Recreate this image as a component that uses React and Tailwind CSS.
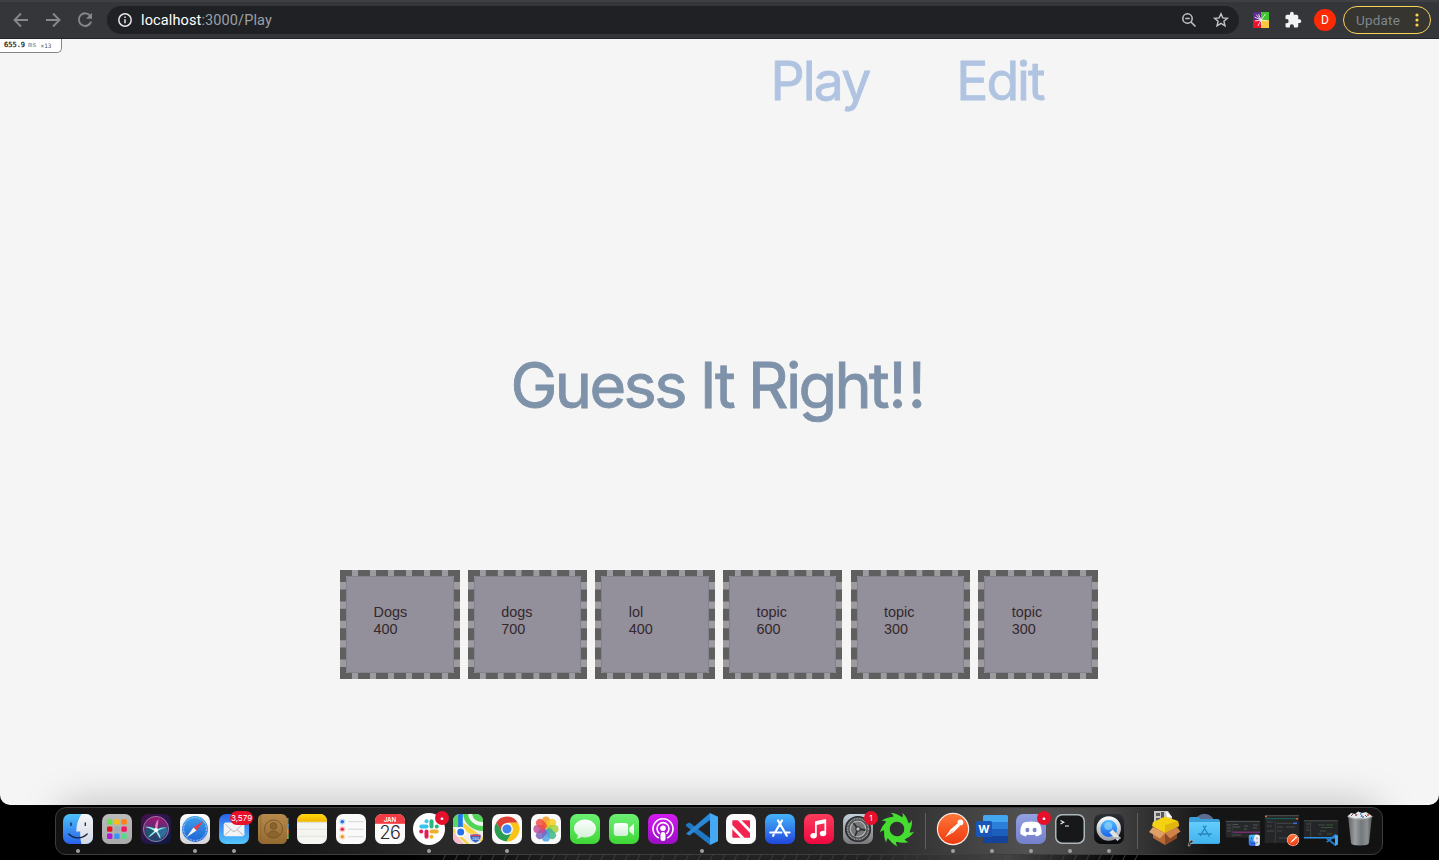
import React from 'react';

const petals = [0, 45, 90, 135, 180, 225, 270, 315];

function Svg({ children, className = 'h-[30px] w-[30px]' }) {
  return (
    <svg viewBox="0 0 30 30" className={'block shrink-0 overflow-visible ' + className}>
      {children}
    </svg>
  );
}

function Gradients() {
  const g = (id, a, b, diag) => (
    <linearGradient id={id} x1="0" y1="0" x2={diag ? 1 : 0} y2="1">
      <stop offset="0" stopColor={a} />
      <stop offset="1" stopColor={b} />
    </linearGradient>
  );
  return (
    <svg className="absolute h-0 w-0">
      <defs>
        {g('gFinder', '#4cc1fb', '#2a62ea')}
        {g('gFinderR', '#f4f5f8', '#d3d9e4')}
        {g('gGray', '#b9bab9', '#a9aaa9')}
        {g('gSiri', '#47104f', '#0b1b45', true)}
        {g('gOrb', '#a01475', '#154a6b')}
        {g('gBlue', '#3fa1ea', '#1b62d6')}
        {g('gMail', '#2a63ea', '#53c7fb')}
        {g('gPaper', '#ffffff', '#d5d5d8')}
        {g('gBrown', '#b58a4b', '#94692f')}
        {g('gYellow', '#ffd60a', '#f0b400')}
        {g('gGreen', '#6bf073', '#3fd636')}
        {g('gWhite', '#ffffff', '#d0efd4')}
        {g('gPod', '#d31bf0', '#9a0fc4')}
        {g('gStore', '#45b4fa', '#2047dc')}
        {g('gMusic', '#fb3b5c', '#ee083f')}
        {g('gPref', '#c4d0da', '#77787a')}
        {g('gPost', '#ff7638', '#ee3a10')}
        {g('gDisc', '#93a0e2', '#7480cb')}
        {g('gQt', '#2c2f33', '#090a0b')}
        {g('gSilver', '#f7f7f9', '#9da4ad')}
        {g('gLens', '#52c8ff', '#1557ec')}
        {g('gFolder', '#64cdfd', '#3fb2ee')}
        <linearGradient id="gTrash" x1="0" x2="1">
          <stop offset="0" stopColor="#5f6365" />
          <stop offset=".3" stopColor="#9a9ea0" />
          <stop offset=".55" stopColor="#73787a" />
          <stop offset=".8" stopColor="#8c9092" />
          <stop offset="1" stopColor="#505355" />
        </linearGradient>
        <clipPath id="cRound"><rect width="30" height="30" rx="7" /></clipPath>
      </defs>
    </svg>
  );
}

const Tile = ({ fill }) => <rect width="30" height="30" rx="7" fill={fill} />;

const finderArt = (
  <g clipPath="url(#cRound)">
    <rect width="30" height="30" fill="url(#gFinder)" />
    <path d="M18.500 0C15 5 13.400 11 13.200 17.500h4c-.2 4.500.2 8.500 1.300 12.500H30V0z" fill="url(#gFinderR)" />
    <path d="M8 9v2.400M22.300 9v2.400M5.800 20c5 5.200 13.400 5.200 18.400 0" fill="none" stroke="#15233d" strokeWidth="1.300" strokeLinecap="round" />
  </g>
);

const vsArt = (
  <g>
    <path d="M-1 10.300l3.500-1.900L23 24v7L-1 12z" fill="#1f78c4" />
    <path d="M-1 19.700L23-1v7L2.500 21.600z" fill="#2b87d6" />
    <path d="M23-1l8 3.800v24.400L23 31z" fill="#45a8f4" />
  </g>
);

const postArt = (
  <g>
    <circle cx="15" cy="15" r="16.200" fill="#f8ece6" />
    <circle cx="15" cy="15" r="15" fill="url(#gPost)" />
    <path d="M7 23.500l5.500-8 7-6 2.600 2.300-6.600 6.500-5.500 3z" fill="#fff" />
    <path d="M12 19.500l3-3" stroke="#ee6d42" strokeWidth=".7" />
    <circle cx="22.400" cy="8.400" r="2.900" fill="#fff" />
  </g>
);

const Finder = () => <Svg>{finderArt}</Svg>;

const Launchpad = () => {
  const c = ['#62e64a', '#fbbd13', '#fa8313', '#e8131b', '#a3abb0', '#f2185f', '#b018d8', '#3a93f5', '#57d98f'];
  return (
    <Svg>
      <Tile fill="url(#gGray)" />
      {c.map((f, i) => (
        <rect key={i} x={5 + (i % 3) * 7.200} y={5.200 + Math.floor(i / 3) * 7.200} width="5.400" height="5.400" rx="1.300" fill={f} />
      ))}
    </Svg>
  );
};

const Siri = () => (
  <Svg>
    <Tile fill="url(#gSiri)" />
    <circle cx="15" cy="15" r="12.600" fill="url(#gOrb)" stroke="#a98bb4" strokeWidth=".8" />
    <path d="M5 16c3-5 6-4 10-1-2 5-4 8-8 8-1.500-1.500-2-4-2-7z" fill="#1d5470" />
    <path d="M16 16c4-4 8-4 10.500-1-1 5-3 8-7 9-1-3-1.500-5-3.500-8z" fill="#2f6d9c" />
    <path d="M4 13c4-.6 8 .4 11 2.600 4-1.600 7-2.400 11-2-4 .9-7 2-9.500 3.400 2 2.500 3 5.500 3 8-2-2.500-3.400-5-4.500-7-2.500 2-5 4.400-8 5.500 1.800-2.500 4-4.700 6.500-6.500C10.500 15 7.500 13.800 4 13z" fill="#8eece4" />
    <path d="M14.500 16c-1-5 .6-8 3-11-.5 4-.5 7-1.500 11z" fill="#ef7fc0" />
    <circle cx="15" cy="16" r="2" fill="#fff" />
  </Svg>
);

const Safari = () => (
  <Svg>
    <Tile fill="url(#gPaper)" />
    <circle cx="15" cy="15" r="12.900" fill="url(#gBlue)" />
    <circle cx="15" cy="15" r="11.500" fill="none" stroke="#d9ecfb" strokeWidth="1.300" strokeDasharray=".5 1" />
    <path d="M23.500 6.800L13.500 13.500l3 3z" fill="#f8363b" />
    <path d="M6.500 23.200L13.500 13.500l3 3z" fill="#f5f5f5" />
  </Svg>
);

const Mail = () => (
  <Svg>
    <Tile fill="url(#gMail)" />
    <rect x="4.700" y="8.600" width="20.700" height="13.600" rx="2" fill="#f2f3f5" />
    <path d="M5.500 9.500l8 7.300q1.500 1.200 3 0l8-7.300M5.500 21.500l6.500-6M24.500 21.500l-6.500-6" fill="none" stroke="#a5a9b0" strokeWidth=".8" />
  </Svg>
);

const Contacts = () => (
  <Svg>
    <path d="M28 4h2.500v7H28z" fill="#7f8a83" />
    <path d="M28 10h2.700v5H28z" fill="#3f9fe0" />
    <path d="M28 15h2.700v5H28z" fill="#e88b31" />
    <path d="M28 20h2.700v5H28z" fill="#58bd61" />
    <rect x="0" width="29" height="30" rx="5.500" fill="url(#gBrown)" />
    <path d="M2.700 1v28" stroke="#8a6230" strokeWidth=".6" />
    <g fill="none" stroke="#7b5729" strokeWidth="1">
      <circle cx="15.500" cy="15" r="9" />
      <circle cx="15.500" cy="12" r="3.400" fill="#8a642f" />
      <path d="M9.500 21.500c1-6 11-6 12 0-3 3-9 3-12 0z" fill="#8a642f" />
    </g>
  </Svg>
);

const Notes = () => (
  <Svg>
    <g clipPath="url(#cRound)">
      <rect width="30" height="30" fill="#f4f4f1" />
      <rect width="30" height="7.800" fill="url(#gYellow)" />
      <path d="M0 8.600h30" stroke="#b5b3a8" strokeWidth=".7" strokeDasharray=".7 .7" />
      <path d="M0 15.300h30M0 22.300h30" stroke="#dcdcda" strokeWidth=".8" />
    </g>
  </Svg>
);

const Reminders = () => (
  <Svg>
    <Tile fill="#fafafa" />
    {['#1e6ee8', '#ec2b3e', '#f4922c'].map((c, i) => (
      <g key={c}>
        <circle cx="6.300" cy={7.700 + i * 7.500} r="2.600" fill="none" stroke={c} strokeOpacity=".45" strokeWidth=".6" />
        <circle cx="6.300" cy={7.700 + i * 7.500} r="1.800" fill={c} />
        <path d={`M12 ${7.700 + i * 7.500}h15.500`} stroke="#cfcfcf" strokeWidth=".9" />
      </g>
    ))}
  </Svg>
);

const Calendar = () => (
  <Svg>
    <g clipPath="url(#cRound)">
      <rect width="30" height="30" fill="#fafafa" />
      <rect width="30" height="9.800" fill="#f23c41" />
    </g>
    <text x="15" y="7.800" textAnchor="middle" fontFamily="Inter, sans-serif" fontWeight="600" fontSize="6.200" fill="#fff">JAN</text>
    <text x="14.800" y="25.400" textAnchor="middle" fontFamily="Inter, sans-serif" fontWeight="300" fontSize="18" letterSpacing="-.6" fill="#292929">26</text>
  </Svg>
);

const Slack = () => (
  <Svg>
    <circle cx="15" cy="15" r="16" fill="#fff" />
    <g strokeWidth="4" strokeLinecap="round">
      <path d="M7.300 12.500h5.200" stroke="#36c5f0" />
      <path d="M12.500 7.200v.1" stroke="#36c5f0" />
      <path d="M17.500 7.300v5.200" stroke="#2eb67d" />
      <path d="M22.700 12.500h.1" stroke="#2eb67d" />
      <path d="M17.500 17.500h5.200" stroke="#ecb22e" />
      <path d="M17.500 22.700v.1" stroke="#ecb22e" />
      <path d="M12.500 17.500v5.200" stroke="#e01e5a" />
      <path d="M7.200 17.500h.1" stroke="#e01e5a" />
    </g>
  </Svg>
);

const Maps = () => (
  <Svg>
    <g clipPath="url(#cRound)">
      <rect width="30" height="30" fill="#f0eee8" />
      <path d="M10 0h20v17C20 17 11 10 10 0z" fill="#4ed457" />
      <path d="M17 0c1 6 6 10 13 10" fill="none" stroke="#f4f4f0" strokeWidth="4" />
      <path d="M0 0h6v13H0z" fill="#5dd365" />
      <path d="M0 18l11 12H0z" fill="#f7bccb" />
      <path d="M9 11l21 15" stroke="#fbd33a" strokeWidth="5" />
      <path d="M-1 15l18 17" stroke="#f6d042" strokeWidth="2.500" />
      <path d="M7.500 0v16" stroke="#1e78f0" strokeWidth="4.600" />
      <circle cx="7.700" cy="18" r="5.200" fill="#fff" />
      <circle cx="7.700" cy="18" r="3.500" fill="#2473ec" />
      <path d="M17 20.500q5.500-1.500 11 0v3q-.5 3.500-5.500 5.500-5-2-5.500-5.500z" fill="#3162c4" stroke="#fff" strokeWidth=".7" />
      <path d="M17.500 21.500h10" stroke="#e8414a" strokeWidth="1.400" />
    </g>
    <text x="22.500" y="26.300" textAnchor="middle" fontFamily="Inter, sans-serif" fontSize="3.800" fill="#fff">280</text>
  </Svg>
);

const Chrome = () => (
  <Svg>
    <Tile fill="#fafafa" />
    <path d="M15 15L4.200 8.800A12.400 12.400 0 0 1 25.800 8.800H15z" fill="#dd4034" />
    <path d="M4.200 8.800A12.400 12.400 0 0 0 14.500 27.400L20.300 18 9.700 18z" fill="#2a9e51" />
    <path d="M25.800 8.800A12.400 12.400 0 0 1 14.500 27.400L20.400 18 18 8.800z" fill="#fbc316" />
    <path d="M4.200 8.800l5.500 9.200L15 15V8.800z" fill="#dd4034" />
    <path d="M4.200 8.800l6.500 11 1-1z" fill="#2a9e51" />
    <circle cx="15" cy="15" r="5.900" fill="#fff" />
    <circle cx="15" cy="15" r="4.600" fill="#4084f3" />
  </Svg>
);

const Photos = () => {
  const c = ['#f79a1d', '#f6cd1b', '#a6cf3c', '#3fb58c', '#4ba2e2', '#7763be', '#c14e99', '#ef4d40'];
  return (
    <Svg>
      <Tile fill="#fafafa" />
      {petals.map((a, i) => (
        <rect key={a} x="11.100" y="2.400" width="7.800" height="12" rx="3.900" fill={c[i]} opacity=".84" transform={`rotate(${a} 15 15)`} />
      ))}
    </Svg>
  );
};

const Messages = () => (
  <Svg>
    <Tile fill="url(#gGreen)" />
    <path d="M15 5.500c6.300 0 11 4 11 9s-4.700 9-11 9c-1.300 0-2.600-.2-3.700-.5-1.200 1-3 1.700-5 1.700 1-.9 1.600-2.200 1.500-3.500C5.400 19.500 4 17.100 4 14.500c0-5 4.700-9 11-9z" fill="url(#gWhite)" />
  </Svg>
);

const FaceTime = () => (
  <Svg>
    <Tile fill="url(#gGreen)" />
    <rect x="4.800" y="9" width="14.300" height="13" rx="3" fill="url(#gWhite)" />
    <path d="M20.300 13.800l4.700-4v11.700l-4.700-4z" fill="url(#gWhite)" />
  </Svg>
);

const Podcasts = () => (
  <Svg>
    <Tile fill="url(#gPod)" />
    <g fill="none" stroke="#fff" strokeWidth="1.600" strokeLinecap="round">
      <path d="M10.400 23.700a10 10 0 1 1 9.200 0" />
      <path d="M11.200 19.300a6 6 0 1 1 7.600 0" />
    </g>
    <circle cx="15" cy="14.300" r="2.800" fill="#fff" />
    <rect x="12.500" y="18" width="5" height="9" rx="2.500" fill="#fff" />
  </Svg>
);

const News = () => (
  <Svg>
    <Tile fill="#fcfcfc" />
    <path d="M6.300 7.500v-.2q0-1 1-1h4.500L24 19v4.700H18.500L6.300 11z" fill="#f3234f" />
    <path d="M15.500 6.300H23q1 0 1 1v7.500z M6.300 15.200l8.200 8.500H7.300q-1 0-1-1z" fill="#f3234f" />
  </Svg>
);

const AppStore = () => (
  <Svg>
    <Tile fill="url(#gStore)" />
    <g stroke="#fff" strokeWidth="2.200" strokeLinecap="round">
      <path d="M13 6.500l8.800 15.200M17 6.500L10 18.500M8.700 20.800l-.6 1M5.300 18.500h11M20.500 18.500h4" />
    </g>
  </Svg>
);

const Music = () => (
  <Svg>
    <Tile fill="url(#gMusic)" />
    <path d="M11.200 7.200l10.800-2.300v4L11.200 11.200z" fill="#fff" />
    <path d="M11.900 8v13.500M21.300 6v13" stroke="#fff" strokeWidth="1.700" />
    <ellipse cx="9.600" cy="21.800" rx="3.200" ry="2.700" fill="#fff" />
    <ellipse cx="19" cy="19.500" rx="3.200" ry="2.700" fill="#fff" />
  </Svg>
);

const Preferences = () => (
  <Svg>
    <Tile fill="url(#gPref)" />
    <circle cx="15" cy="15" r="12.400" fill="#48494b" stroke="#2b2c2e" strokeWidth="1.400" />
    <circle cx="15" cy="15" r="10.400" fill="none" stroke="#a4a6a8" strokeWidth="1.600" strokeDasharray=".9 .7" />
    <circle cx="15" cy="15" r="7.800" fill="#77797c" stroke="#b1b3b5" strokeWidth="1.300" />
    <path d="M15 15l7.500 1M15 15l-4.600-6M15 15l-3 7.200" stroke="#303133" strokeWidth="1.800" />
    <circle cx="15" cy="15" r="2.200" fill="#bcbec0" stroke="#303133" strokeWidth="1.100" />
  </Svg>
);

const GreenRing = () => (
  <Svg>
    <circle cx="15" cy="15" r="11" fill="none" stroke="#46dc31" strokeWidth="4.200" />
    {[0, 40, 80, 120, 160, 200, 240, 280, 320].map((a) => (
      <g key={a} transform={`rotate(${a} 15 15)`}>
        <path d="M20 3.500C17 .8 13.500-.8 8.500-1.200 10.500 0 11.500 1.500 12 4z" fill="#46dc31" />
        <path d="M21 5.500C17 4 13 5 10 9c3-1.500 6-1.800 9.500-.5z" fill="#46dc31" />
      </g>
    ))}
  </Svg>
);

const Postman = () => <Svg>{postArt}</Svg>;

const Word = () => (
  <Svg>
    <path d="M7 1h22.500a1.500 1.500 0 0 1 1.500 1.500V8H6V2.500z" fill="#43a6ee" />
    <path d="M6 8h25v7H6z" fill="#2b7fd8" />
    <path d="M6 15h25v7H6z" fill="#1c5fbd" />
    <path d="M6 22h25v5.500a1.500 1.500 0 0 1-1.500 1.500h-22A1.500 1.500 0 0 1 6 27.500z" fill="#15429a" />
    <rect x="-1" y="7" width="16" height="16" rx="1.500" fill="#1955b6" />
    <text x="7" y="19.200" textAnchor="middle" fontFamily="Inter, sans-serif" fontWeight="700" fontSize="11" fill="#fff">W</text>
  </Svg>
);

const Discord = () => (
  <Svg>
    <Tile fill="url(#gDisc)" />
    <path d="M10.500 8q4.500-1.100 9 0c1-.1 3 .5 3.800 1.500 1.800 3 2.700 6.500 2.300 10.300-1.600 1.500-3.600 2.400-5.400 2.600l-1.300-2q-3.900 1-7.800 0l-1.300 2c-1.800-.2-3.800-1.100-5.400-2.600C4 16 4.900 12.500 6.700 9.500 7.500 8.500 9.500 7.900 10.500 8z" fill="#fff" />
    <ellipse cx="11.400" cy="16" rx="2" ry="2.200" fill="#7885cf" />
    <ellipse cx="18.600" cy="16" rx="2" ry="2.200" fill="#7885cf" />
  </Svg>
);

const Terminal = () => (
  <Svg>
    <rect width="30" height="30" rx="7" fill="#abb7ba" />
    <rect x="1.500" y="1.500" width="27" height="27" rx="5.800" fill="#171819" />
    <path d="M5.500 6.500l3.300 1.800-3.300 1.800M10 12h4" fill="none" stroke="#f0f0f0" strokeWidth="1.100" />
  </Svg>
);

const QuickTime = () => (
  <Svg>
    <Tile fill="url(#gQt)" />
    <circle cx="14.700" cy="14.500" r="10.300" fill="url(#gLens)" stroke="url(#gSilver)" strokeWidth="3.800" />
    <path d="M17 17l8 8.500" stroke="#dfe2e5" strokeWidth="4.300" />
    <path d="M20 24h6.500" stroke="#adb2b7" strokeWidth="2" />
    <circle cx="14.300" cy="12" r="4" fill="#a2dffb" opacity=".6" />
  </Svg>
);

const Box = () => (
  <Svg>
    <path d="M4-3h14l4 6v10H4z" fill="#c8c8c8" />
    <path d="M6-1h4v3H6zM11-2h3v6h-3zM6 4h4v3H6z" fill="#595959" />
    <path d="M16-3l6 6-5 1z" fill="#fff" />
    <path d="M3 14l12-5 12 5v10l-12 7-12-7z" fill="#b66a37" />
    <path d="M15 19l12-5v10l-12 7z" fill="#8a4a26" />
    <path d="M3 8l12-5.500L28 7l1 5-14 7L2 12z" fill="#f4d213" />
    <path d="M15 11l13-4 1 5-14 7z" fill="#e0b50e" />
    <path d="M3 13l12 6-5 5.500-11-6.500z" fill="#e09f66" />
    <path d="M27 13l-12 6 5 5.500 10.500-7z" fill="#cf8249" />
  </Svg>
);

const AppsFolder = () => (
  <Svg>
    <circle cx="15.500" cy="10" r="10.300" fill="#5d6d8e" />
    <path d="M0 4.500Q0 3 2 3h7l3 2h17q2 0 2 2.500v20.500q0 1.800-1.800 1.800H1.500Q0 29.800 0 28z" fill="#3a9fd9" />
    <path d="M0 8h31v20q0 1.800-1.800 1.800H1.500Q0 29.800 0 28z" fill="url(#gFolder)" />
    <path d="M14.300 12l5.800 10.300M17 12L11.500 21.500M9.500 20h8M20 20h2.300" fill="none" stroke="#2584bd" strokeWidth="1.300" strokeLinecap="round" />
    <path d="M-.8 32q0-4 2.500-5l-.6-1 3.300.6-1.500 3-.6-1q-1.500 1-1.400 3.400z" fill="#111" stroke="#ccc" strokeWidth=".6" />
  </Svg>
);

const WindowFiles = () => (
  <Svg>
    <rect x="-2.300" y="6.500" width="34.500" height="17" fill="#26282a" />
    <path d="M-2 7.500h34" stroke="#4a4d4f" strokeWidth="1" />
    <path d="M-1 11h4M-1 14h4M-1 17h4M5 10.500h5M5 13h7M5 21h8M16 12h4M16 15h3M25 11h5M25 14h4M25 21h5" stroke="#5d6162" strokeWidth=".8" />
    <path d="M5 18.200h27" stroke="#962c90" strokeWidth="1.100" />
    <path d="M4.200 9v14" stroke="#3f4244" strokeWidth=".8" />
    <g transform="translate(20.500 20.500) scale(.38)">{finderArt}</g>
  </Svg>
);

const WindowPostman = () => (
  <Svg>
    <rect x="-2.300" y="1" width="34.500" height="28" fill="#252628" />
    <path d="M-2 1.700h34" stroke="#4d5051" strokeWidth="1" />
    <path d="M-1 4.700h30" stroke="#15655a" strokeWidth="1" />
    <path d="M-2 2.500h2M29 4.700h2" stroke="#ee6035" strokeWidth="1.500" />
    <path d="M10 9.300h15M0 8h6M0 12h5M10 13h6M19 13h9M0 17h7M10 17h5M12 24h8" stroke="#4f5355" strokeWidth=".8" />
    <path d="M26 9.300h4" stroke="#3275e0" strokeWidth="1.500" />
    <path d="M8.300 7v22" stroke="#444648" strokeWidth=".7" />
    <g transform="translate(20.300 20.300) scale(.38)">{postArt}</g>
  </Svg>
);

const WindowCode = () => (
  <Svg>
    <rect x="-2.300" y="6" width="34.500" height="18.300" fill="#232527" />
    <path d="M-2 6.800h34" stroke="#4a4d4f" strokeWidth="1" />
    <path d="M-2 23.700h34" stroke="#2f8fe4" strokeWidth="1.400" />
    <path d="M0 10h4M0 13h3M0 16h4M12 11h7M14 17h6M12 20h4" stroke="#565b5e" strokeWidth=".7" />
    <path d="M15 13.500h12M20 11h7M21 20h5" stroke="#3d5a3c" strokeWidth=".9" />
    <path d="M4.600 8v15" stroke="#494c4e" strokeWidth=".7" />
    <g transform="translate(20.500 20.500) scale(.37)">{vsArt}</g>
  </Svg>
);

const Trash = () => (
  <Svg>
    <path d="M3 1l24 1-3 27q-.3 2.500-9 2.500T6 29z" fill="url(#gTrash)" />
    <path d="M3 2l3-3 4 1 3-2.500 4 1.500 4-1 3 2 3 2-4 2H7z" fill="#e8e8e8" />
    <path d="M6 2l2-2M11 2l1-2M20 1l2 2M16 3l1-2" stroke="#575757" strokeWidth="1" />
    <path d="M10 1h1.500M22 1h2" stroke="#e5453e" strokeWidth="1.500" />
    <path d="M15 0h1.500M17 3h2" stroke="#3f7fd0" strokeWidth="1.300" />
    <path d="M2.500 2.500q12.500 5 25 0" fill="none" stroke="#c4c8c9" strokeWidth="1" />
  </Svg>
);

const apps = [
  { Icon: Finder, dot: true },
  { Icon: Launchpad },
  { Icon: Siri },
  { Icon: Safari, dot: true },
  { Icon: Mail, dot: true, badge: '3,579' },
  { Icon: Contacts },
  { Icon: Notes },
  { Icon: Reminders },
  { Icon: Calendar },
  { Icon: Slack, dot: true, badge: '•' },
  { Icon: Maps },
  { Icon: Chrome, dot: true },
  { Icon: Photos },
  { Icon: Messages },
  { Icon: FaceTime },
  { Icon: Podcasts },
  { Icon: () => <Svg>{vsArt}</Svg>, dot: true },
  { Icon: News },
  { Icon: AppStore },
  { Icon: Music },
  { Icon: Preferences, badge: '1' },
  { Icon: GreenRing },
];

const openApps = [
  { Icon: Postman, dot: true },
  { Icon: Word, dot: true },
  { Icon: Discord, dot: true, badge: '•' },
  { Icon: Terminal, dot: true },
  { Icon: QuickTime, dot: true },
];

const stacks = [
  { Icon: Box },
  { Icon: AppsFolder },
  { Icon: WindowFiles },
  { Icon: WindowPostman },
  { Icon: WindowCode },
  { Icon: Trash },
];

function DockItem({ Icon, dot, badge }) {
  return (
    <div className="relative flex w-[39px] shrink-0 flex-col items-center pt-[6px]">
      <Icon />
      {dot && <span className="mt-[5px] h-1 w-1 rounded-full bg-[#a0a0a0]" />}
      {badge && (
        <span
          className={
            'absolute top-[2.500px] flex h-[14px] items-center justify-center rounded-full bg-[#e6102b] font-[Inter,sans-serif] text-[8px] leading-none text-white ' +
            (badge.length > 1 ? 'right-0 w-[23px]' : '-right-px w-[14px]')
          }
        >
          {badge}
        </span>
      )}
    </div>
  );
}

const Separator = () => (
  <div className="flex w-[17px] shrink-0 justify-center pt-[5px] pl-[2px]">
    <span className="h-9 w-px bg-[#606060]" />
  </div>
);

function Dock() {
  return (
    <div className="ml-[55px] flex h-12 w-[1328px] rounded-[11px] border border-[#3d3d3d] bg-[linear-gradient(90deg,#131313_0%,#171717_18%,#2a2a2a_29%,#222222_38%,#222222_52%,#2b2b2b_62%,#505050_73%,#464646_79%,#151515_87%,#121212_100%)] pl-[2px]">
      {apps.map((a, i) => <DockItem key={i} {...a} />)}
      <Separator />
      {openApps.map((a, i) => <DockItem key={i} {...a} />)}
      <Separator />
      {stacks.map((a, i) => <DockItem key={i} {...a} />)}
    </div>
  );
}

function Toolbar() {
  return (
    <header className="flex h-[39px] shrink-0 items-center border-t-2 border-b border-t-[#3f4044] border-b-[#242326] bg-[#35363a] pr-2 font-[Roboto,sans-serif]">
      <div className="flex w-[107px] items-center gap-2 pl-[9px]">
        <svg viewBox="0 0 24 24" className="h-6 w-6" fill="none" stroke="#86888a" strokeWidth="1.900"><path d="M19 12H6M12 5.500L5.500 12l6.500 6.500" /></svg>
        <svg viewBox="0 0 24 24" className="h-6 w-6" fill="none" stroke="#86888a" strokeWidth="1.900"><path d="M5 12h13M12 5.500l6.500 6.500-6.500 6.500" /></svg>
        <svg viewBox="0 0 24 24" className="h-6 w-6" fill="none" stroke="#86888a" strokeWidth="1.900"><path d="M17.500 8.200A6.300 6.300 0 1 0 18.200 13.500" /><path d="M19 4.800v6h-6z" fill="#86888a" stroke="none" /></svg>
      </div>
      <div className="flex h-7 w-[1132px] items-center rounded-full bg-[#202124] pr-[9px] pl-[10px]">
        <svg viewBox="0 0 16 16" className="h-4 w-4" fill="none" stroke="#e4e5e7" strokeWidth="1.500"><circle cx="8" cy="8" r="6.200" /><path d="M8 7.200v4M8 4.600v1.400" /></svg>
        <p className="ml-2 pt-[2px] text-[14.500px] leading-none tracking-[0.120px] text-[#9aa0a6]"><span className="text-white">localhost</span>:3000/Play</p>
        <svg viewBox="0 0 18 18" className="ml-auto h-[18px] w-[18px]" fill="none" stroke="#c3c5c8" strokeWidth="1.500"><circle cx="7.500" cy="7.500" r="4.700" /><path d="M11 11l4.500 4.500M5.300 7.500h4.400" /></svg>
        <svg viewBox="0 0 18 18" className="ml-[14px] h-[18px] w-[18px]" fill="none" stroke="#c3c5c8" strokeWidth="1.400"><path d="M9 2.700l1.800 4.200 4.600.4-3.500 3 1.100 4.500L9 12.400l-4 2.400 1.100-4.500-3.500-3 4.600-.4z" /></svg>
      </div>
      <svg viewBox="0 0 16 16" className="ml-[14px] h-4 w-4">
        <path d="M0 0h8v8H0z" fill="#5b2a8c" /><path d="M8 0h8v8H8z" fill="#3fc62c" /><path d="M0 8h8v8H0z" fill="#e8142d" /><path d="M8 8h8v8H8z" fill="#fbc93d" />
        <path d="M8 8L3 2.500M8 8L5.500 2M8 8L1.500 5M8 8l4.500-6M8 8l-6 1M8 8l-3 6M8 8l6 .8M8 8l1 5" stroke="#f6edf5" strokeWidth=".9" />
      </svg>
      <svg viewBox="0 0 24 24" className="ml-[15px] h-[18px] w-[18px]" fill="#f1f3f4"><path d="M20.500 11H19V7a2 2 0 0 0-2-2h-4V3.500a2.500 2.500 0 0 0-5 0V5H4a2 2 0 0 0-2 2v3.800h1.500a2.700 2.700 0 0 1 0 5.400H2V20a2 2 0 0 0 2 2h3.800v-1.500a2.700 2.700 0 0 1 5.400 0V22H17a2 2 0 0 0 2-2v-4h1.500a2.500 2.500 0 0 0 0-5z" /></svg>
      <span className="ml-[12px] flex h-[22px] w-[22px] items-center justify-center rounded-full bg-[#fc2a05] text-[12px] text-white">D</span>
      <div className="ml-auto flex h-7 w-[88px] items-center rounded-full border border-[#fbd353] bg-[#363530] pl-3 text-[13.500px] text-[#7f878f]">
        <span className="tracking-[0.200px]">Update</span>
        <svg viewBox="0 0 4 14" className="ml-[15px] h-[14px] w-1" fill="#fdd34f"><circle cx="2" cy="2" r="1.600" /><circle cx="2" cy="7" r="1.600" /><circle cx="2" cy="12" r="1.600" /></svg>
      </div>
    </header>
  );
}

const cards = [
  ['Dogs', 400],
  ['dogs', 700],
  ['lol', 400],
  ['topic', 600],
  ['topic', 300],
  ['topic', 300],
];

export default function App() {
  return (
    <div className="flex h-[860px] w-[1439px] flex-col overflow-hidden bg-black">
      <Gradients />
      <div className="flex h-[805px] shrink-0 flex-col overflow-hidden rounded-b-[10px] bg-[#f5f5f5]">
        <Toolbar />
        <main className="flex flex-1 flex-col">
          <div className="flex h-[14px] w-[62px] items-center gap-1 rounded-br-[5px] border-r border-b border-[#858585] bg-white pl-1 font-[DejaVu_Sans_Mono,monospace] text-[7px] leading-none whitespace-nowrap text-[#777]">
            <span><span className="text-[#111] [-webkit-text-stroke:0.200px_#111]">655.9</span><span className="ml-[3px]">ms</span></span>
            <span className="text-[6px] text-[#555]">×13</span>
          </div>
          <nav className="flex h-[56px] items-center gap-[87px] pl-[770.500px] font-[Inter,sans-serif] text-[53.500px] leading-none text-[#b0c4e2] [-webkit-text-stroke:0.800px_#b0c4e2]">
            <a className="tracking-[-1.900px]">Play</a>
            <a className="tracking-[-2.100px]">Edit</a>
          </nav>
          <h1 className="mt-[244px] pl-[510.500px] font-[Inter,sans-serif] text-[63px] leading-[64px] font-normal tracking-[-2.650px] text-[#7e92aa] [-webkit-text-stroke:0.900px_#7e92aa]">
            Guess It Right<span className="ml-[1.500px] tracking-[1px]">!!</span>
          </h1>
          <div className="mt-[153px] flex gap-[8.040px] pl-[340px]">
            {cards.map(([name, points], i) => (
              <div key={i} className="h-[109px] w-[119.600px] shrink-0 border-[6px] border-dashed border-[#5f5f5f] bg-[#9d9ba0]">
                <div className="h-full rounded-[2px] border border-[#858290] bg-[#93909b] pt-[27px] pl-[26.600px] font-[Liberation_Sans,Arial,sans-serif] text-[14.400px] leading-[17px] text-[#35272b]">
                  <p>{name}</p>
                  <p>{points}</p>
                </div>
              </div>
            ))}
          </div>
          <div className="mx-[62px] mt-[128px] h-12 shrink-0 rounded-[11px] shadow-[0_0_42px_rgba(0,0,0,0.270)]" />
        </main>
      </div>
      <footer className="h-[55px] shrink-0 bg-black bg-[repeating-linear-gradient(115deg,transparent_0_4px,#3a3a3a_5px,transparent_6px_11px),linear-gradient(90deg,#000_0%,#000_28%,#222_40%,#222_60%,#444_70%,#000_78%)] bg-size-[700px_5px,1439px_5px] bg-position-[440px_50px,0_50px] bg-no-repeat pt-[2px]">
        <Dock />
      </footer>
    </div>
  );
}
